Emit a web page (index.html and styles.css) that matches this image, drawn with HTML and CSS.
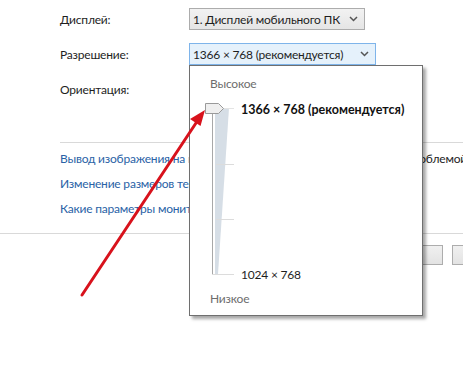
FILE: index.html
```html
<!DOCTYPE html>
<html lang="ru">
<head>
  <meta charset="UTF-8" />
  <meta name="viewport" content="width=device-width, initial-scale=1.0">
  <title>Разрешение экрана</title>
  <link rel="stylesheet" href="styles.css">
</head>
<body>

  <!-- Settings -->
  <div class="settings">
    <div class="row">
      <span class="label">Дисплей:</span>
      <div class="select">
        <span>1. Дисплей мобильного ПК</span>
        <svg class="chevron" width="9" height="6" viewBox="0 0 9 6"><path d="M1 1 L4.5 4.5 L8 1" fill="none" stroke="#555" stroke-width="1.5"/></svg>
      </div>
    </div>
    <div class="row">
      <span class="label">Разрешение:</span>
      <div class="select open">
        <span>1366 × 768 (рекомендуется)</span>
        <svg class="chevron" width="9" height="6" viewBox="0 0 9 6"><path d="M1 1 L4.5 4.5 L8 1" fill="none" stroke="#555" stroke-width="1.5"/></svg>
      </div>
    </div>
    <div class="row">
      <span class="label">Ориентация:</span>
    </div>
  </div>

  <div class="sep"></div>

  <!-- Links -->
  <div class="links">
    <div class="link-row">
      <a href="#">Вывод изображения на второй экран</a>
      <span class="tail">проблемой</span>
    </div>
    <div class="link-row"><a href="#">Изменение размеров текста и других элементов</a></div>
    <div class="link-row"><a href="#">Какие параметры монитора следует выбрать?</a></div>
  </div>

  <div class="sep full"></div>

  <!-- Buttons -->
  <div class="footer">
    <button>ОК</button>
    <button class="wide">Отмена</button>
  </div>

  <!-- Resolution popup -->
  <div class="popup">
    <div class="level">Высокое</div>
    <div class="slider-area">
      <svg class="slider" width="32" height="178" viewBox="0 0 32 178">
        <polygon points="11,7 25,7 14,173 11,173" fill="#d6dee6"/>
        <line x1="8.5" y1="10" x2="8.5" y2="173" stroke="#a8a8a8" stroke-width="1"/>
        <line x1="12" y1="63.5" x2="30" y2="63.5" stroke="#dcdcdc" stroke-width="1"/>
        <line x1="12" y1="118.5" x2="30" y2="118.5" stroke="#dcdcdc" stroke-width="1"/>
        <line x1="8" y1="173.5" x2="30" y2="173.5" stroke="#dcdcdc" stroke-width="1"/>
        <line x1="20" y1="7.5" x2="30" y2="7.5" stroke="#e4e4e4" stroke-width="1"/>
        <polygon points="1.5,2.5 14.5,2.5 19.5,7.5 14.5,12.5 1.5,12.5" fill="#efefef" stroke="#9a9a9a" stroke-width="1"/>
      </svg>
      <div class="values">
        <div class="value best">1366 × 768 (рекомендуется)</div>
        <div class="value">1024 × 768</div>
      </div>
    </div>
    <div class="level">Низкое</div>
  </div>

  <!-- Red arrow -->
  <svg class="arrow" width="463" height="377" viewBox="0 0 463 377">
    <line x1="82" y1="295" x2="198" y2="120" stroke="#d8121c" stroke-width="3" stroke-linecap="round"/>
    <polygon points="205,110 200.5,126 190,119" fill="#d8121c"/>
  </svg>

</body>
</html>
```

FILE: styles.css
```css
html, body {
  margin: 0;
  height: 100%;
  overflow: hidden;
  background: #fff;
  font-family: Lato, "Noto Sans", sans-serif;
  font-size: 12px;
  letter-spacing: -0.2px;
  color: #1e1e1e;
}

body {
  position: relative;
}

.settings {
  padding: 8px 0 0 60px;
}

.row {
  display: flex;
  align-items: center;
  height: 22px;
  margin-bottom: 13px;
}

.label {
  width: 129px;
}

.select {
  display: flex;
  align-items: center;
  justify-content: space-between;
  box-sizing: border-box;
  height: 22px;
  width: 176px;
  padding: 0 6px 0 3px;
  border: 1px solid #acacac;
  background: linear-gradient(#f2f2f2, #e5e5e5);
  white-space: nowrap;
}

.select.open {
  width: 187px;
  border-color: #7eb4ea;
  background: #e5f1fb;
}

.chevron {
  display: block;
}

.sep {
  height: 1px;
  background: #d9d9d9;
  margin: 42px 0 0 60px;
}

.sep.full {
  margin: 12px 0 0 0;
}

.links {
  padding: 3px 0 0 60px;
}

.link-row {
  display: flex;
  height: 25px;
  line-height: 25px;
  white-space: nowrap;
}

.link-row a {
  color: #2a62a6;
  text-decoration: none;
}

.tail {
  margin-left: auto;
  margin-right: -4px;
}

.footer {
  display: flex;
  justify-content: flex-end;
  gap: 9px;
  margin: 11px -100px 0 0;
}

.footer button {
  width: 75px;
  height: 20px;
  border: 1px solid #adadad;
  background: linear-gradient(#f0f0f0, #e3e3e3);
  font: inherit;
  color: #1e1e1e;
}

.footer button.wide {
  width: 111px;
}

/* Popup */
.popup {
  position: absolute;
  left: 189px;
  top: 65px;
  width: 234px;
  height: 251px;
  box-sizing: border-box;
  border: 1px solid #6f6f6f;
  background: #fff;
  box-shadow: 3px 3px 3px rgba(0, 0, 0, 0.35);
  padding: 9px 0 0 20px;
}

.level {
  color: #6d6d6d;
  line-height: 17px;
}

.slider-area {
  display: flex;
  margin: 9px 0 11px -6px;
}

.slider {
  display: block;
}

.values {
  display: flex;
  flex-direction: column;
  justify-content: space-between;
  margin-left: 5px;
}

.value {
  line-height: 17px;
  color: #1e1e1e;
}

.value.best {
  font-size: 12.5px;
  letter-spacing: 0;
  font-weight: bold;
  color: #111;
}

.value:last-child {
  margin-bottom: -4px;
}

.arrow {
  position: absolute;
  left: 0;
  top: 0;
  pointer-events: none;
}
```
